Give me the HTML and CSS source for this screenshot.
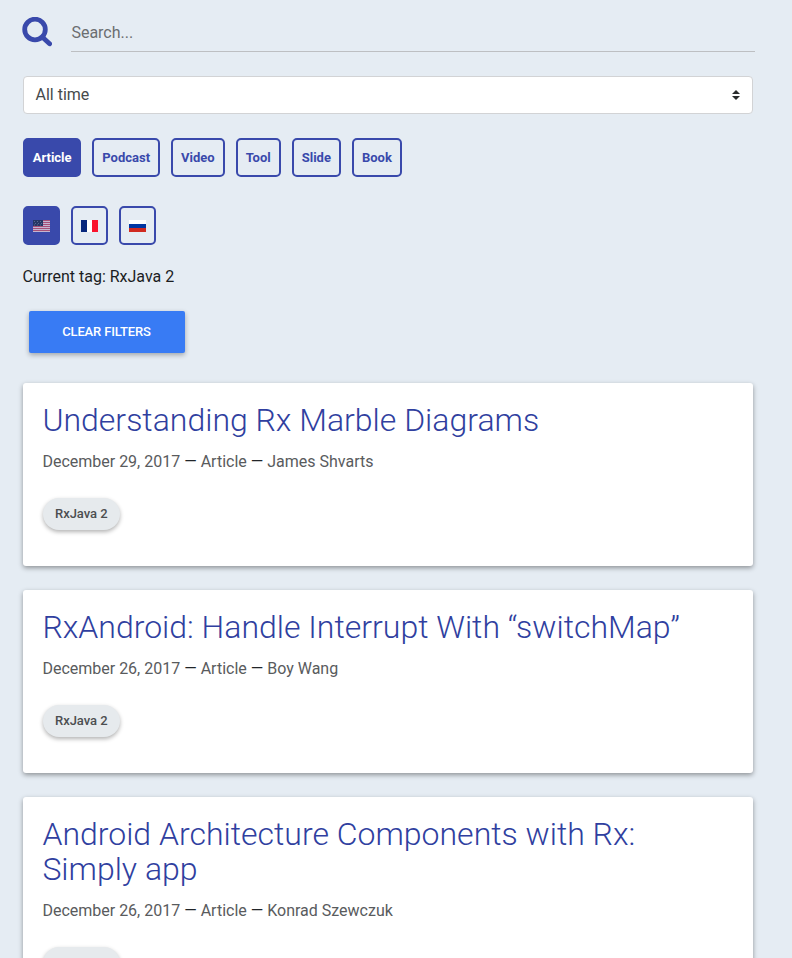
FILE: index.html
```
<!DOCTYPE html>
<html lang="en">
<head>
  <meta charset="UTF-8" />
  <meta name="viewport" content="width=device-width, initial-scale=1" />
  <title>RxJava 2</title>
  <link rel="stylesheet" href="styles.css">
</head>
<body>

  <main class="container">
    <form class="search">
      <svg class="search-icon" width="30" height="30" viewBox="0 0 30 30" fill="none">
        <circle cx="13" cy="12.5" r="10.3" stroke="#3949ab" stroke-width="4.8" />
        <path d="M20.5 20.3L27.6 26.8" stroke="#3949ab" stroke-width="4.8" stroke-linecap="round" />
      </svg>
      <input class="search-input" type="text" placeholder="Search...">
    </form>

    <div class="period">
      <span>All time</span>
      <svg width="8" height="10" viewBox="0 0 8 10" fill="#292b2c">
        <path d="M0 4L4 0L8 4ZM0 6L4 10L8 6Z" />
      </svg>
    </div>

    <div class="filters types">
      <button class="filter active">Article</button>
      <button class="filter">Podcast</button>
      <button class="filter">Video</button>
      <button class="filter">Tool</button>
      <button class="filter">Slide</button>
      <button class="filter">Book</button>
    </div>

    <div class="filters languages">
      <button class="filter flag active" aria-label="English">
        <svg width="17" height="12" viewBox="0 0 17 12">
          <path fill="#c5b5d0" d="M0 0h17v12H0z" />
          <path fill="#a65078" d="M0 0h17v1H0zM0 2h17v1H0zM0 4h17v1H0zM0 6h17v1H0zM0 8h17v1H0zM0 10h17v1H0z" />
          <path fill="#263765" d="M0 0h10v6H0z" />
          <path stroke="#596a91" stroke-width="1" stroke-dasharray="1 2" d="M1 1.5h8M2 3.5h7M1 5h8" />
        </svg>
      </button>
      <button class="filter flag" aria-label="French">
        <svg width="17" height="12" viewBox="0 0 17 12">
          <path fill="#fff" d="M0 0h17v12H0z" />
          <path fill="#07277c" d="M0 0h6v12H0z" />
          <path fill="#fa142d" d="M11 0h6v12h-6z" />
        </svg>
      </button>
      <button class="filter flag" aria-label="Russian">
        <svg width="17" height="12" viewBox="0 0 17 12">
          <path fill="#fff" d="M0 0h17v4H0z" />
          <path fill="#0036a2" d="M0 4h17v4H0z" />
          <path fill="#d02a20" d="M0 8h17v4H0z" />
        </svg>
      </button>
    </div>

    <p class="current-tag">Current tag: RxJava 2</p>
    <button class="clear-btn">CLEAR FILTERS</button>

    <article class="card">
      <h2 class="card-title">Understanding Rx Marble Diagrams</h2>
      <p class="card-meta"><span>December 29, 2017</span> — <span>Article</span> — <span>James Shvarts</span></p>
      <span class="chip">RxJava 2</span>
    </article>

    <article class="card">
      <h2 class="card-title">RxAndroid: Handle Interrupt With “switchMap”</h2>
      <p class="card-meta"><span>December 26, 2017</span> — <span>Article</span> — <span>Boy Wang</span></p>
      <span class="chip">RxJava 2</span>
    </article>

    <article class="card">
      <h2 class="card-title">Android Architecture Components with Rx: Simply app</h2>
      <p class="card-meta"><span>December 26, 2017</span> — <span>Article</span> — <span>Konrad Szewczuk</span></p>
      <span class="chip">RxJava 2</span>
    </article>
  </main>

</body>
</html>
```
FILE: styles.css
```
* {
  box-sizing: border-box;
}

html {
  height: 100%;
  overflow: hidden;
}

body {
  margin: 0;
  height: 100%;
  overflow: hidden;
  font-family: Roboto, sans-serif;
  font-size: 16px;
  line-height: 24px;
  background: #e5ecf3;
  color: #212529;
}

.container {
  width: 730px;
  margin-left: 23px;
  padding-top: 12px;
}

.search {
  display: flex;
  width: 732px;
  height: 40px;
}

.search-icon {
  flex: none;
  margin: 5px 19px 0 -1px;
}

.search-input {
  flex: 1;
  height: 40px;
  padding: 2px 0 0 0.4px;
  border: none;
  border-bottom: 1px solid #bdbfc2;
  background: transparent;
  font: inherit;
}

.search-input::placeholder {
  color: #6b6e70;
  opacity: 1;
}

.period {
  display: flex;
  align-items: center;
  justify-content: space-between;
  height: 38px;
  margin-top: 24px;
  padding: 0 12px 0 11.5px;
  border: 1px solid #d2d3d5;
  border-radius: 4px;
  background: #fff;
  color: #464a4c;
}

.filters {
  display: flex;
  gap: 11px;
}

.types {
  margin-top: 24px;
}

.languages {
  margin-top: 29px;
}

.filter {
  height: 39px;
  padding: 0 8px;
  border: 2px solid #3949ab;
  border-radius: 5px;
  background: transparent;
  color: #3949ab;
  font: 700 13px Roboto, sans-serif;
}

.filter.active {
  background: #3949ab;
  color: #fff;
}

.types .active {
  padding: 0 7.7px;
}

.flag {
  display: flex;
  align-items: center;
  width: 37px;
  padding: 1px 8px 0;
}

.current-tag {
  margin: 20px 0 22px -0.5px;
  color: #1b1d1f;
}

.clear-btn {
  display: block;
  width: 156px;
  height: 42px;
  margin: 0 0 30px 6px;
  padding: 0 1px 2px 0;
  border: none;
  border-radius: 2px;
  background: #387bf4;
  color: #fff;
  font: 500 13px Roboto, sans-serif;
  letter-spacing: -0.15px;
  box-shadow: 0 2px 5px rgba(0, 0, 0, 0.3);
}

.card {
  margin-bottom: 24px;
  padding: 20px 20px 36px 19.4px;
  border-radius: 3px;
  background: #fff;
  box-shadow: 0 2px 5px rgba(0, 0, 0, 0.38);
}

.card-title {
  margin: 0 0 12px;
  font-size: 32px;
  font-weight: 300;
  line-height: 35px;
  color: #303f9f;
}

.card-meta {
  margin: 0 0 24px;
  color: #212529;
}

.card-meta span {
  color: #595b5d;
}

.chip {
  display: block;
  width: 77px;
  height: 32px;
  margin-left: 0.4px;
  border-radius: 16px;
  background: #e6eaed;
  color: #4c4e50;
  font-size: 13px;
  font-weight: 500;
  line-height: 32px;
  letter-spacing: -0.05px;
  text-align: center;
  box-shadow: 0 2px 4px rgba(0, 0, 0, 0.3);
}
```
